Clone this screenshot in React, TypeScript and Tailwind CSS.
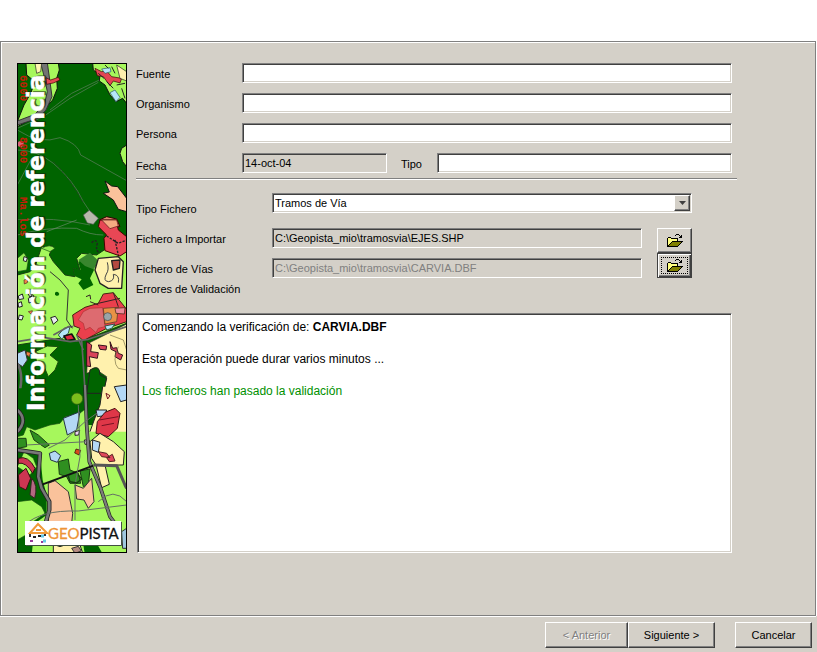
import React from "react";

const sunken =
  "border border-t-[#808080] border-l-[#808080] border-b-white border-r-white shadow-[inset_1px_1px_0_#404040,inset_-1px_-1px_0_#d4d0c8]";
const raised =
  "border border-t-white border-l-white border-b-[#404040] border-r-[#404040] bg-[#d4d0c8] shadow-[inset_-1px_-1px_0_#808080]";
const field = `block h-5 min-w-0 rounded-none px-[2px] text-[11px] outline-none ${sunken}`;

function MapBanner() {
  return (
    <svg viewBox="0 0 110 490" className="block h-[490px] w-[110px] shrink-0" role="img" aria-label="Información de referencia, Geopista">
      <rect width="110" height="490" fill="#006400" />
      {/* Upper woodland */}
      <g transform="translate(-7 -8) scale(0.3333)" strokeLinejoin="round">
        <path d="M48 24 L145 24 148 45 140 70 142 100 128 135 105 160 92 190 60 195 22 215 22 200 42 150 62 115 75 80 50 60Z" fill="#a6f75c" stroke="#111" strokeWidth="3" />
        <path d="M92 24 L112 24 120 80 126 125 108 165 85 190 22 210 22 198 75 178 104 145 112 110 104 70Z" fill="#737373" stroke="#333" strokeWidth="3" />
        <path d="M75 24 L95 24 92 50 80 55Z" fill="#fff6b0" stroke="#222" strokeWidth="2" />
        <path d="M108 68 L122 75 145 67 150 75 130 84 110 88Z" fill="#e34752" stroke="#300" strokeWidth="2" />
        <path d="M248 24 L350 24 350 145 338 130 318 140 300 120 285 90 268 78 270 60 250 45Z" fill="#a6f75c" stroke="#111" strokeWidth="3" />
        <path d="M255 40 L275 50 290 48 305 65 335 70 330 84 310 78 300 92 280 65 262 62Z" fill="#e34752" stroke="#300" strokeWidth="2" />
        <path d="M320 30 L350 50 350 78 330 70Z" fill="#fff0ae" stroke="#222" strokeWidth="2" />
        <path d="M300 113 L315 105 330 127 318 140Z M275 42 L300 38 303 50 285 55Z" fill="#b5e5f8" stroke="#256" strokeWidth="2" />
        <path d="M285 30 L295 40 M305 35 L315 55 M265 55 L282 70 M320 90 L345 85 M290 80 L310 100 M335 100 L345 130" stroke="#222" strokeWidth="3" />
        <g fill="none" stroke="#648064" strokeWidth="2">
          <path d="M22 220 L100 185 180 130 265 82 M120 165 L185 115 268 75 M22 225 Q90 270 150 248 Q205 265 212 300 L350 377 M22 285 Q80 285 130 325 Q190 375 220 440 L240 470 M22 390 L65 310 M22 495 Q130 485 240 510" />
          <path d="M130 320 Q180 370 218 440" stroke="#333" strokeDasharray="8 5" />
        </g>
        <path d="M350 270 L335 280 330 295 338 320 350 335Z" fill="#a6f75c" stroke="#111" strokeWidth="3" />
        <path d="M285 378 L305 393 323 395 350 430 350 470 325 463 310 435 280 415 298 411Z" fill="#fac29b" stroke="#111" strokeWidth="3" />
        <path d="M220 480 L238 466 265 490 250 508 232 504Z" fill="#b8b8ac" stroke="#555" strokeWidth="2" />
        <path d="M268 495 L290 485 320 492 330 515 280 515Z" fill="#e38a72" stroke="#300" strokeWidth="3" />
        <path d="M22 500 L42 495 48 515 22 515Z" fill="#a6f75c" />
        <circle cx="32" cy="267" r="9" fill="#d9607a" />
      </g>
      {/* Village and fields */}
      <g transform="translate(-7 157) scale(0.3333)" strokeLinejoin="round">
        <path d="M22 165 L60 155 75 140 95 80 128 78 118 105 130 125 165 165 195 170 190 145 210 150 200 115 215 100 260 105 350 45 350 310 260 345 200 365 180 350 155 380 150 355 22 375Z" fill="#a6f75c" stroke="#173d12" strokeWidth="3" />
        <path d="M190 145 L212 150 205 125 235 112 252 150 240 175 250 195 220 210 205 190 215 178 194 168Z" fill="#006400" />
        <path d="M205 120 L240 98 268 125 250 148 225 138Z" fill="#38862d" />
        <path d="M22 0 L55 0 50 50 22 55Z" fill="#006400" />
        <path d="M22 115 L42 98 55 120 50 150 22 155Z M95 85 Q120 70 135 85 L120 95Z" fill="#96ee55" stroke="#174d10" strokeWidth="2" />
        <path d="M265 115 L325 110 340 125 335 205 295 205 270 190 255 150Z" fill="#fff1ad" stroke="#222" strokeWidth="4" />
        <path d="M292 127 Q298 150 289 162 Q278 184 296 185 Q315 182 310 163 Q330 165 325 188" fill="none" stroke="#444" strokeWidth="3" />
        <path d="M305 122 L330 120 328 145 310 150Z" fill="#b54a40" stroke="#222" strokeWidth="4" />
        <path d="M270 0 L318 0 325 30 350 50 350 95 330 108 285 92 282 55 290 45 265 20Z" fill="#e84755" stroke="#400" strokeWidth="3" />
        <path d="M275 0 L320 0 325 18 300 26Z" fill="#f4aa82" stroke="#511" strokeWidth="2" />
        <path d="M290 48 L325 70 350 60 M315 60 L325 105 M245 68 Q258 55 262 70 Q255 95 270 98" fill="none" stroke="#222" strokeWidth="4" strokeDasharray="7 4" />
        <path d="M188 285 L225 262 265 250 280 222 310 218 350 268 350 305 290 325 220 362 200 345 210 325 192 318Z" fill="#ea3f4c" stroke="#421" strokeWidth="3" />
        <path d="M220 275 L240 265 278 263 285 320 265 325 258 338 240 322 225 330 220 310 205 300Z" fill="#dd6b70" stroke="#a33" strokeWidth="2" />
        <path d="M280 265 L325 262 320 305 285 312Z" fill="#e99245" stroke="#432" strokeWidth="2" />
        <circle cx="293" cy="290" r="12" fill="#9aa5a8" stroke="#444" strokeWidth="2" />
        <path d="M315 265 L345 263 343 282 318 280Z" fill="#ed8a98" stroke="#321" strokeWidth="2" />
        <path d="M265 250 L330 235 M310 218 L325 260 M240 245 L265 255 M228 230 L240 225 242 238" fill="none" stroke="#322" strokeWidth="3" />
        <path d="M285 318 L315 312 305 325 290 330Z M145 345 L162 325 180 320 175 340 155 357Z" fill="#b5e5f8" stroke="#354" strokeWidth="3" />
        <path d="M162 348 L185 342 195 358 170 362Z" fill="#e12640" stroke="#111" strokeWidth="5" />
        <path d="M22 378 L80 370 145 355 200 365 218 390 222 510 22 510Z" fill="#006400" />
        <path d="M112 378 L145 380 120 405 145 425 135 450 115 470 100 435 80 430 75 395Z" fill="#a6f75c" stroke="#1a4d0e" strokeWidth="3" />
        <path d="M235 370 L350 312 350 520 280 520 290 470 260 450 230 460Z" fill="#fff1ad" stroke="#222" strokeWidth="2" />
        <path d="M240 450 Q270 430 270 465 L290 475 280 520 230 520Z" fill="#006400" stroke="#222" strokeWidth="3" />
        <path d="M230 365 L245 375 242 395 265 398 262 415 238 410 242 440 230 438Z M265 375 L290 378 288 390 270 388Z M300 365 L308 385 320 383 325 400 338 405 332 420 315 410 318 395 303 388Z" fill="#d9435a" stroke="#34131c" strokeWidth="3" />
        <path d="M300 345 L340 360 350 390 M325 380 Q305 425 325 445 L350 450" fill="none" stroke="#777047" strokeWidth="2" />
        <path d="M130 345 L175 320 190 320 M20 365 L100 352 180 365 235 358 350 320 M215 360 L225 510 M200 345 L220 390" fill="none" stroke="#646464" strokeWidth="5" />
        <path d="M120 155 L150 180 175 210 170 300 187 325" fill="none" stroke="#333" strokeWidth="3" />
        <path d="M22 45 Q110 20 200 25 Q240 45 280 45 M110 35 L200 0" fill="none" stroke="#6d896d" strokeWidth="2" />
        <g fill="#e8edf0" stroke="#222" strokeWidth="3">
          <path d="M25 228 l12 -6 4 14 -14 3z M24 250 l10 -5 3 14 -11 3z M28 285 l12 3 -4 12 -11 -2z M55 235 l16 -9 1 18 -15 5z M53 220 l14 3 -7 8z M122 293 l14 -4 8 12 -14 12z M42 110 l10 3 -3 12 -9 -3z" />
        </g>
        <path d="M42 180 l12 -4 -2 12 -9 4z M55 275 l12 -3 -2 12z M50 395 l12 3 -4 12 -10 -6z" fill="#f08345" stroke="#522" strokeWidth="2" />
        <path d="M135 218 q8 -7 13 4 q-4 10 -13 2z" fill="#006400" />
        <path d="M22 400 L45 390 52 420 38 440 22 430Z" fill="#b4d8f5" stroke="#333" strokeWidth="3" />
        <path d="M22 430 Q40 460 30 510" fill="none" stroke="#666" strokeWidth="8" />
      </g>
      {/* Lower fields */}
      <g transform="translate(-7 322) scale(0.3333)" strokeLinejoin="round">
        <path d="M22 75 L230 75 235 120 350 120 350 510 22 510Z" fill="#a6f75c" />
        <path d="M22 10 L222 10 222 75 205 88 165 95 150 115 120 120 75 135 50 125 40 150 22 155Z" fill="#006400" />
        <path d="M222 75 L205 88 165 95 150 115 120 120 75 135 50 125 40 150 22 155" fill="none" stroke="#174d10" strokeWidth="2" />
        <path d="M60 135 L85 150 118 180 105 188 72 165Z M22 160 L48 160 50 185 22 190Z M145 230 L175 222 180 255 205 265 212 295 180 295 170 275 148 268Z M210 258 L240 252 235 300 220 305Z" fill="#2f8f20" stroke="#183d12" strokeWidth="3" />
        <path d="M160 100 L210 80 200 135 172 150Z M118 205 L135 198 152 212 142 232 122 225Z" fill="#b4d8f5" stroke="#234" strokeWidth="3" />
        <circle cx="201" cy="41" r="17" fill="#7bbd1c" stroke="#375e12" strokeWidth="2" />
        <path d="M278 5 L350 5 350 140 240 140 258 90 270 60Z" fill="#fff1ad" />
        <path d="M278 5 L270 60 258 90 240 140" fill="none" stroke="#222" strokeWidth="3" />
        <path d="M313 5 L350 0 350 45 332 50Z M258 75 L290 75 285 92 262 95Z" fill="#b4d8f5" stroke="#222" strokeWidth="3" />
        <path d="M285 82 L315 70 330 85 322 130 295 155 258 145 262 110Z" fill="#df3748" stroke="#411" strokeWidth="3" />
        <path d="M268 105 L325 95 M275 122 L312 115 M288 25 L300 32 293 42Z" fill="none" stroke="#712" strokeWidth="3" />
        <path d="M240 170 L270 145 310 170 343 200 340 240 285 240 298 298 275 308 258 240 245 220Z" fill="#fff1ad" stroke="#222" strokeWidth="3" />
        <path d="M265 200 L290 205 300 218 275 215Z M290 218 L307 208 315 228 298 230Z" fill="#e1485b" stroke="#522" strokeWidth="3" />
        <path d="M248 165 L270 172 265 202 247 195Z" fill="#b4d8f5" stroke="#222" strokeWidth="3" />
        <path d="M198 192 l14 4 -5 14 -13 -6z" fill="#d64b1c" stroke="#200" strokeWidth="2" />
        <path d="M195 140 l14 -4 -3 14 -11 1z M223 165 l14 0 0 12 -12 1z" fill="#efd4f4" stroke="#222" strokeWidth="3" />
        <path d="M115 295 L135 287 175 320 188 385 185 415 115 415Z M195 300 L220 310 245 280 252 350 235 370 222 345 200 342Z" fill="#fac29b" stroke="#333" strokeWidth="3" />
        <path d="M22 190 L90 205 98 285 110 330 110 390 75 415 65 510 22 510Z" fill="#006400" />
        <path d="M22 350 L65 345 95 365 105 385 70 410 65 440 22 465Z M42 200 L70 220 80 245 60 270 22 245Z" fill="#a6f75c" stroke="#174d10" strokeWidth="2" />
        <path d="M25 220 Q55 210 75 250 L68 265 Q48 230 25 235Z M25 270 L48 250 62 280 48 315 28 305Z" fill="#cc3652" stroke="#311" strokeWidth="3" />
        <path d="M65 280 Q85 300 74 340 L60 330Z" fill="#b46881" stroke="#322" strokeWidth="3" />
        <path d="M22 195 L90 205 85 275 95 310 118 350 118 375 105 420 M22 140 Q55 105 22 75" fill="none" stroke="#222" strokeWidth="13" />
        <path d="M22 195 L90 205 85 275 95 310 118 350 118 375 105 420 M22 140 Q55 105 22 75" fill="none" stroke="#777" strokeWidth="8" />
        <path d="M225 0 L230 120 238 230 272 310 300 395 315 415" fill="none" stroke="#222" strokeWidth="11" />
        <path d="M225 0 L230 120 238 230 272 310 300 395 315 415" fill="none" stroke="#7c7c7c" strokeWidth="7" />
        <path d="M98 298 L250 242" stroke="#111" strokeWidth="6" />
        <path d="M250 240 L320 242 345 300 350 310" fill="none" stroke="#555" strokeWidth="9" />
        <path d="M115 190 L165 165 225 110 260 85 M50 180 L230 170 M205 60 L210 215 195 300 195 405 M45 420 Q90 375 205 378 L350 360 M265 350 Q310 305 350 350" fill="none" stroke="#647064" strokeWidth="3" />
        <path d="M174 270 L180 290 200 294 215 282 205 270" fill="none" stroke="#173d12" strokeWidth="4" />
        <path d="M130 478 L150 485 180 475 210 480 220 510 130 510Z" fill="#fff1ad" stroke="#222" strokeWidth="3" />
        <path d="M220 480 L260 475 280 510 225 510Z M58 435 L75 425 75 475 50 490Z" fill="#006400" />
        <path d="M185 490 L205 484 214 498 195 505Z" fill="#b58b82" stroke="#333" strokeWidth="3" />
        <path d="M335 440 L350 430 350 490 338 490Z" fill="#9fc8de" stroke="#333" strokeWidth="3" />
      </g>
      <g fill="#c51c08" fontFamily="'Liberation Mono', monospace" fontSize="11" fontWeight="700">
        <text x="12" y="-3" transform="rotate(90)">6000</text>
        <text x="74" y="-3" transform="rotate(90)">8000</text>
        <text x="134" y="-3" transform="rotate(90)">Ma.los</text>
      </g>
      <g fontFamily="'DejaVu Sans', Verdana, sans-serif" fontSize="23" fontWeight="700">
        <text x="-347" y="29" transform="rotate(-90)" fill="#102010" opacity="0.65" aria-hidden="true">Información de referencia</text>
        <text x="-348" y="27" transform="rotate(-90)" fill="#fff" stroke="#fff" strokeWidth="0.5">Información de referencia</text>
      </g>
      <path d="M9 482.5 H104.5 V459" fill="none" stroke="#435043" />
      <rect x="8" y="458" width="96" height="24" fill="#fff" />
      <path d="M13 470 L21 461 30 470Z" fill="#fff" stroke="#f09a38" strokeWidth="2" />
      <path d="M19 467 h5" stroke="#f09a38" strokeWidth="2" />
      <path d="M13 471 v3 M28 471 v2" stroke="#333" strokeWidth="2" />
      <path d="M16 474 h3 M21 473 h3" stroke="#222" strokeWidth="2" />
      <path d="M24 473 h3 M26 478 h3" stroke="#63c8e6" strokeWidth="3" />
      <path d="M13 478 h3 M24 479 h2" stroke="#983a99" strokeWidth="2" />
      <text x="31" y="476" fontFamily="Lato, 'Open Sans', sans-serif" fontSize="15" fill="#ed9436" stroke="#ed9436" strokeWidth="0.3">
        GEO<tspan fill="#111" stroke="#111">PISTA</tspan>
      </text>
      <rect x="0.5" y="0.5" width="109" height="489" fill="none" stroke="#000" />
    </svg>
  );
}

const folderPixels = [
  ".........###....",
  "........#...#.#.",
  ".............##.",
  ".###........###.",
  "#YYY#######.....",
  "#YYYYYYYYY#.....",
  "#YYYYYYYYY#.....",
  "#YYYY###########",
  "#YYY#OOOOOOOOO#.",
  "#YY#OOOOOOOOO#..",
  "#Y#OOOOOOOOO#...",
  "##OOOOOOOOO#....",
  "###########.....",
];
const folderColors: Record<string, string> = { "#": "#000", Y: "#ffff80", O: "#808000" };

function FolderIcon() {
  return (
    <svg width="16" height="13" viewBox="0 0 16 13" shapeRendering="crispEdges" aria-hidden="true">
      {folderPixels.flatMap((row, y) =>
        [...row].map((c, x) =>
          c === "." ? null : <rect key={`${x}-${y}`} x={x} y={y} width="1" height="1" fill={folderColors[c]} />
        )
      )}
    </svg>
  );
}

function TextRow({ id, label }: { id: string; label: string }) {
  return (
    <div className="mr-[5px] flex items-start">
      <label htmlFor={id} className="w-[106px] shrink-0 pt-[3px]">{label}</label>
      <input id={id} type="text" className={`${field} flex-1 bg-white`} />
    </div>
  );
}

export default function App() {
  return (
    <div className="flex min-h-screen flex-col bg-[#d4d0c8] pt-[41px] font-['Liberation_Sans',Arial,sans-serif] text-[11px] leading-4 text-black shadow-[inset_0_41px_0_#fff]">
      <main className="mr-px flex grow border border-[#808080] pr-[78px] pb-[62px] pl-4 pt-[21px] shadow-[inset_1px_1px_0_#fff,0_1px_0_#fff,1px_0_0_#fff]">
        <MapBanner />
        <form className="ml-[9px] flex min-w-0 flex-1 flex-col" onSubmit={(e) => e.preventDefault()}>
          <div className="flex flex-col gap-[10px]">
            <TextRow id="fuente" label="Fuente" />
            <TextRow id="organismo" label="Organismo" />
            <TextRow id="persona" label="Persona" />
            <div className="mr-[5px] flex items-start">
              <label htmlFor="fecha" className="w-[106px] shrink-0 pt-[5px]">Fecha</label>
              <input id="fecha" type="text" readOnly defaultValue="14-oct-04" className={`${field} w-[145px] bg-[#d4d0c8]`} />
              <label htmlFor="tipo" className="w-[50px] shrink-0 pt-[3px] pl-[14px]">Tipo</label>
              <input id="tipo" type="text" className={`${field} flex-1 bg-white`} />
            </div>
          </div>
          <hr className="mt-1 h-[2px] border-t border-b border-t-[#808080] border-b-white" />

          <div className="mt-[13px] flex items-start">
            <label htmlFor="tipo-fichero" className="w-[136px] shrink-0 pt-2">Tipo Fichero</label>
            <div className="relative mr-[45px] min-w-0 flex-1">
              <select id="tipo-fichero" className={`${field} w-full appearance-none bg-white`}>
                <option>Tramos de Vía</option>
              </select>
              <span aria-hidden="true" className={`pointer-events-none absolute top-[2px] right-[2px] flex h-4 w-4 items-center justify-center ${raised}`}>
                <svg width="7" height="4" viewBox="0 0 7 4"><path d="M0 0h7L3.5 4z" fill="#404040" /></svg>
              </span>
            </div>
          </div>

          <div className="mt-[11px] mr-[45px] flex">
            <div className="flex min-w-0 flex-1 flex-col gap-[10px]">
              <div className="flex items-start">
                <label htmlFor="importar" className="w-[136px] shrink-0 pt-[3px]">Fichero a Importar</label>
                <input id="importar" type="text" readOnly defaultValue="C:\Geopista_mio\tramosvia\EJES.SHP" className={`${field} flex-1 bg-[#d4d0c8]`} />
              </div>
              <div className="flex items-start">
                <label htmlFor="vias" className="w-[136px] shrink-0 pt-[3px]">Fichero de Vías</label>
                <input id="vias" type="text" disabled defaultValue="C:\Geopista_mio\tramosvia\CARVIA.DBF" className={`${field} flex-1 bg-[#d4d0c8] text-[#808080]`} />
              </div>
            </div>
            <div className="ml-[15px] flex w-[35px] shrink-0 flex-col">
              <button type="button" aria-label="Abrir fichero a importar" className={`flex h-[25px] items-center justify-center ${raised}`}>
                <FolderIcon />
              </button>
              <button type="button" aria-label="Abrir fichero de vías" className="flex h-[25px] border border-[#404040] bg-[#d4d0c8] p-[3px] shadow-[inset_1px_1px_0_#fff,inset_-1px_-1px_0_#404040,inset_-2px_-2px_0_#808080]">
                <span className="flex h-full w-full items-center justify-center border border-dotted border-black">
                  <FolderIcon />
                </span>
              </button>
            </div>
          </div>

          <h2 id="errores" className="mt-[3px]">Errores de Validación</h2>
          <div role="log" aria-labelledby="errores" className={`mt-4 mr-[5px] ml-px min-h-[240px] bg-white px-1 pt-[5px] text-[12px] ${sunken}`}>
            <p>Comenzando la verificación de: <b>CARVIA.DBF</b></p>
            <p className="mt-4">Esta operación puede durar varios minutos ...</p>
            <p className="mt-4 text-[#009000]">Los ficheros han pasado la validación</p>
          </div>
        </form>
      </main>
      <footer className="flex h-9 items-start justify-end pt-[6px] pr-[5px]">
        <button type="button" disabled className={`h-[26px] w-[83px] text-[#808080] [text-shadow:1px_1px_0_#fff] ${raised}`}>&lt; Anterior</button>
        <button type="button" className={`h-[26px] w-[87px] ${raised}`}>Siguiente &gt;</button>
        <button type="button" className={`ml-5 h-[26px] w-[77px] ${raised}`}>Cancelar</button>
      </footer>
    </div>
  );
}
